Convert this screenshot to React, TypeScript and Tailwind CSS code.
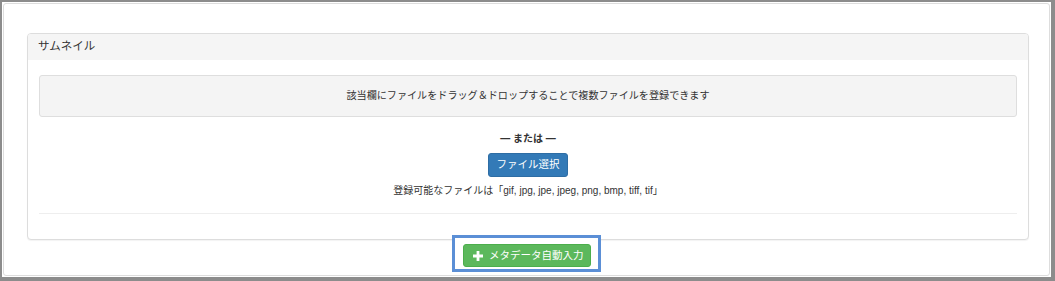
import React from "react";

const jp = { fontFamily: '"Liberation Sans", "Noto Sans CJK JP", sans-serif' };

function Plus() {
  return (
    <svg width="10" height="10" viewBox="0 0 10 10" className="shrink-0">
      <path d="M3.6 0h2.8v3.6H10v2.8H6.4V10H3.6V6.4H0V3.6h3.6z" fill="#fff" />
    </svg>
  );
}

export default function App() {
  return (
    <div
      className="w-[1055px] h-[281px] bg-[#8c8c8c] pt-[2px] pl-[2px] pr-[4px] pb-[4px] text-[#333]"
      style={jp}
    >
      <div className="h-full bg-white p-[1px]">
        <div className="h-full border border-[#dddddd] rounded-[3px] pt-[29px] pl-[23px] pr-[20px] flex flex-col">
          <div className="border border-[#dddddd] rounded-[4px] bg-white shadow-[0_1px_1px_rgba(0,0,0,0.05)]">
            <div className="h-[26px] bg-[#f5f5f5] rounded-t-[3px] flex items-center pl-[10px] text-[11.5px]">
              サムネイル
            </div>
            <div className="px-[11px] pt-[15px] pb-[25px] flex flex-col items-stretch">
              <div className="h-[42px] bg-[#f4f4f4] border border-[#dedede] rounded-[3px] flex items-center justify-center text-[10.1px]">
                該当欄にファイルをドラッグ＆ドロップすることで複数ファイルを登録できます
              </div>
              <div className="mt-[13px] h-[16px] flex items-center justify-center text-[10px] font-bold">
                ― または ―
              </div>
              <div className="mt-[7px] flex justify-center">
                <button className="w-[80px] h-[24px] bg-[#337ab7] border border-[#2e6da4] rounded-[3px] text-white text-[10.5px] flex items-center justify-center">
                  ファイル選択
                </button>
              </div>
              <div className="mt-[5px] h-[16px] flex items-center justify-center text-[10px]">
                登録可能なファイルは「gif, jpg, jpe, jpeg, png, bmp, tiff, tif」
              </div>
              <div className="mt-[15px] border-t border-[#eeeeee]" />
            </div>
          </div>
          <div className="-mt-[5px] flex justify-center pr-[3px]">
            <div className="relative w-[149px] h-[37px] border-[3px] border-[#5b8fd6] bg-white pl-[8px] pt-[6px]">
              <button className="w-[128px] h-[23px] bg-[#5cb85c] border border-[#4cae4c] rounded-[3px] text-white text-[10.5px] flex items-center gap-[6px] pl-[9px]">
                <Plus />
                <span>メタデータ自動入力</span>
              </button>
            </div>
          </div>
        </div>
      </div>
    </div>
  );
}
